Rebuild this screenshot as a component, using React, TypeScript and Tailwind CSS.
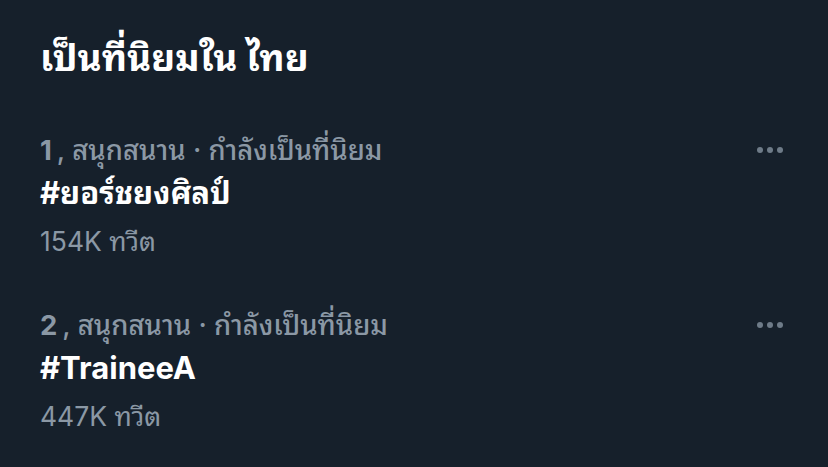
import React from "react";

function Dots() {
  return (
    <div className="flex items-center gap-[4px]">
      <span className="block h-[6px] w-[6px] rounded-full bg-[#6e7b88]" />
      <span className="block h-[6px] w-[6px] rounded-full bg-[#6e7b88]" />
      <span className="block h-[6px] w-[6px] rounded-full bg-[#6e7b88]" />
    </div>
  );
}

function Trend({ rank, tag, count }: { rank: string; tag: string; count: string }) {
  return (
    <div className="flex flex-col">
      <div className="flex h-[34px] items-center justify-between pr-[45px]">
        <div className="text-[27.5px] font-medium leading-[34px] text-[#8b98a5]">
          <span className="font-bold">{rank}</span>
          <span className="ml-[5px]">, สนุกสนาน · กำลังเป็นที่นิยม</span>
        </div>
        <Dots />
      </div>
      <div className="mt-[8px] text-[31px] font-bold leading-[36px] text-white">{tag}</div>
      <div className="mt-[13px] text-[26.5px] leading-[34px] text-[#8b98a5]">{count}</div>
    </div>
  );
}

export default function App() {
  return (
    <div className="h-[467px] w-[828px] overflow-hidden bg-[#16202b] pl-[40px] pt-[35px] font-['Inter','Noto_Sans_Thai_Looped',sans-serif]">
      <h1 className="text-[37px] font-bold leading-[46px] text-white">เป็นที่นิยมใน ไทย</h1>
      <div className="mt-[52px] flex flex-col gap-[50px]">
        <Trend rank="1" tag="#ยอร์ชยงศิลป์" count="154K ทวีต" />
        <Trend rank="2" tag="#TraineeA" count="447K ทวีต" />
      </div>
    </div>
  );
}
